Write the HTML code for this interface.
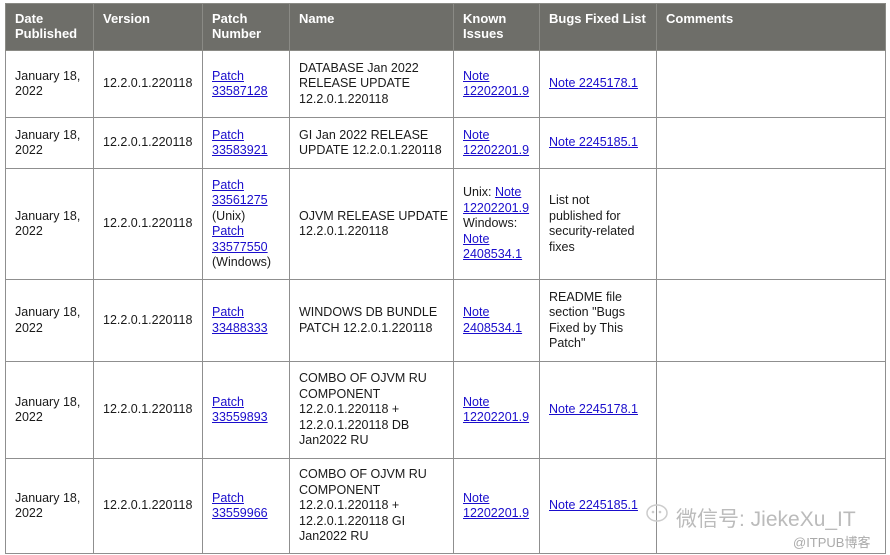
<!DOCTYPE html>
<html><head><meta charset="utf-8"><style>
body{margin:0;background:#fff;width:890px;height:555px;overflow:hidden;position:relative;font-family:"Liberation Sans","DejaVu Sans",sans-serif;}
table{position:absolute;left:5px;top:3px;border-collapse:collapse;table-layout:fixed;font-size:12.5px;line-height:15.5px;color:#1a1a1a;}
td,th{border:1px solid #8f8f8f;padding:0 0 0 9px;vertical-align:middle;text-align:left;}
th{background:#6e6e69;color:#fff;font-weight:bold;font-size:13px;line-height:15px;vertical-align:top;padding-top:7px;border-color:#8a8a85;}
a{color:#1a0dcc;text-decoration:underline;}
.wm{position:absolute;left:676px;top:503px;font-size:21px;color:#bbb;font-family:"Liberation Sans","Noto Sans CJK SC",sans-serif;}
.wm2{position:absolute;left:793px;top:532px;font-size:13px;color:#aaa;font-family:"Liberation Sans","Noto Sans CJK SC",sans-serif;}
</style></head><body>
<table>
<colgroup><col style="width:88px"><col style="width:109px"><col style="width:87px"><col style="width:164px"><col style="width:86px"><col style="width:117px"><col style="width:229px"></colgroup>
<tr style="height:47px"><th>Date<br>Published</th><th>Version</th><th>Patch<br>Number</th><th>Name</th><th>Known<br>Issues</th><th>Bugs Fixed List</th><th>Comments</th></tr>
<tr style="height:67px"><td>January 18,<br>2022</td><td>12.2.0.1.220118</td><td><a>Patch<br>33587128</a></td><td>DATABASE Jan 2022<br>RELEASE UPDATE<br>12.2.0.1.220118</td><td><a>Note<br>12202201.9</a></td><td><a>Note 2245178.1</a></td><td></td></tr>
<tr style="height:51px"><td>January 18,<br>2022</td><td>12.2.0.1.220118</td><td><a>Patch<br>33583921</a></td><td>GI Jan 2022 RELEASE<br>UPDATE 12.2.0.1.220118</td><td><a>Note<br>12202201.9</a></td><td><a>Note 2245185.1</a></td><td></td></tr>
<tr style="height:111px"><td>January 18,<br>2022</td><td>12.2.0.1.220118</td><td><a>Patch<br>33561275</a><br>(Unix)<br><a>Patch<br>33577550</a><br>(Windows)</td><td>OJVM RELEASE UPDATE<br>12.2.0.1.220118</td><td>Unix: <a>Note<br>12202201.9</a><br>Windows:<br><a>Note<br>2408534.1</a></td><td>List not<br>published for<br>security-related<br>fixes</td><td></td></tr>
<tr style="height:82px"><td>January 18,<br>2022</td><td>12.2.0.1.220118</td><td><a>Patch<br>33488333</a></td><td>WINDOWS DB BUNDLE<br>PATCH 12.2.0.1.220118</td><td><a>Note<br>2408534.1</a></td><td>README file<br>section "Bugs<br>Fixed by This<br>Patch"</td><td></td></tr>
<tr style="height:97px"><td>January 18,<br>2022</td><td>12.2.0.1.220118</td><td><a>Patch<br>33559893</a></td><td>COMBO OF OJVM RU<br>COMPONENT<br>12.2.0.1.220118 +<br>12.2.0.1.220118 DB<br>Jan2022 RU</td><td><a>Note<br>12202201.9</a></td><td><a>Note 2245178.1</a></td><td></td></tr>
<tr style="height:95px"><td>January 18,<br>2022</td><td>12.2.0.1.220118</td><td><a>Patch<br>33559966</a></td><td>COMBO OF OJVM RU<br>COMPONENT<br>12.2.0.1.220118 +<br>12.2.0.1.220118 GI<br>Jan2022 RU</td><td><a>Note<br>12202201.9</a></td><td><a>Note 2245185.1</a></td><td></td></tr>
</table>
<svg style="position:absolute;left:645px;top:502px" width="30" height="26"><ellipse cx="12" cy="11" rx="10" ry="8" fill="none" stroke="#ccc" stroke-width="1.5"/><circle cx="8" cy="10" r="1.3" fill="#ccc"/><circle cx="15" cy="10" r="1.3" fill="#ccc"/></svg>
<div class="wm">微信号: JiekeXu_IT</div>
<div class="wm2">@ITPUB博客</div>
</body></html>
